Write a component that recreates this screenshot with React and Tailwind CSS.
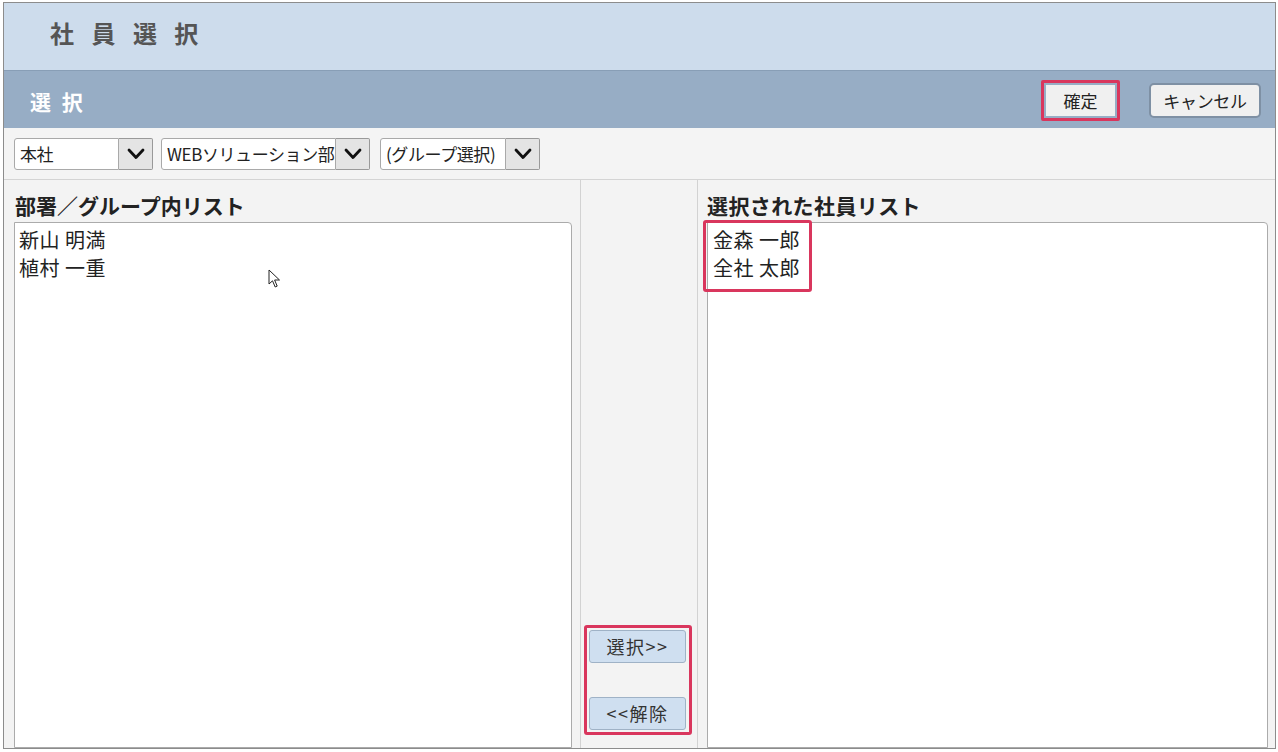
import React from "react";

const FONT = { fontFamily: '"Noto Sans CJK JP", "Noto Sans", sans-serif' };

const Chevron = () => (
  <svg width="18" height="12" viewBox="0 0 18 12">
    <path d="M2 2 L9 9.5 L16 2" fill="none" stroke="#111" strokeWidth="2.8" strokeLinecap="round" strokeLinejoin="round" />
  </svg>
);

// select box with separate dropdown button
const Select = ({ label, width }) => (
  <div className="flex h-[32px]" style={{ width }}>
    <div className="flex-1 min-w-0 flex items-center pl-[5px] bg-white border border-[#a9a9a9] rounded-l-[3px] overflow-hidden whitespace-nowrap text-[17px] tracking-[-0.4px] text-[#222]">
      {label}
    </div>
    <div className="w-[34px] flex items-center justify-center bg-[#e4e4e4] border border-l-0 border-[#999] rounded-r-[2px]">
      <Chevron />
    </div>
  </div>
);

const Cursor = () => (
  <svg className="absolute left-[253px] top-[46px]" width="14" height="20" viewBox="0 0 14 20">
    <path d="M1 1 L1 15 L4.5 11.8 L7.2 18 L9.2 17.1 L6.6 11 L11.5 11 Z" fill="#fff" stroke="#222" strokeWidth="1" strokeLinejoin="round" />
  </svg>
);

const MidButton = ({ children }) => (
  <button className="w-[97px] h-[33px] flex items-center justify-center bg-[#cfdff0] border border-[#9fb2c6] rounded-[3px] text-[18px] tracking-[1.5px] text-[#333]">
    {children}
  </button>
);

export default function App() {
  return (
    <div className="w-[1278px] h-[752px] bg-white pt-[2px] pl-[3px]" style={FONT}>
      <div className="w-[1273px] h-[747px] border border-[#8c8c8c] flex flex-col overflow-hidden">
        {/* title */}
        <div className="h-[67px] shrink-0 bg-[#cddcec] flex items-center pl-[46px] pb-[8px]">
          <h1 className="text-[24px] font-bold text-[#555] tracking-[6px]">社 員 選 択</h1>
        </div>

        {/* action bar */}
        <div className="h-[58px] shrink-0 bg-[#97adc5] border-t border-[#889eb6] flex items-center justify-between pl-[26px] pr-[14px]">
          <span className="text-[21px] font-bold text-white tracking-[3px] pt-[4px]">選 択</span>
          <div className="flex items-center gap-[29px] pt-[2px]">
            <div className="w-[79px] h-[41px] border-[3px] border-[#d9365d] rounded-[2px] p-[2px]">
              <button className="w-full h-full bg-[#f0f0f0] text-[17px] text-[#222] flex items-center justify-center">確定</button>
            </div>
            <button className="w-[112px] h-[35px] bg-[#f0f0f0] border-2 border-[#7e90a4] rounded-[5px] text-[17px] tracking-[-0.3px] text-[#222] flex items-center justify-center">
              キャンセル
            </button>
          </div>
        </div>

        {/* filters */}
        <div className="h-[52px] shrink-0 bg-[#f4f4f4] border-b border-[#d4d4d4] flex items-start pt-[10px] pl-[10px] gap-[8px]">
          <Select label="本社" width={139} />
          <Select label="WEBソリューション部" width={209} />
          <div className="ml-[2px]">
            <Select label="(グループ選択)" width={160} />
          </div>
        </div>

        {/* lists */}
        <div className="flex-1 min-h-0 flex bg-[#f3f3f3]">
          <div className="w-[577px] shrink-0 border-r border-[#d2d2d2] pl-[10px] pt-[11px] flex flex-col">
            <h2 className="h-[28px] leading-[28px] text-[21px] font-bold text-[#222] pl-[1px]">部署／グループ内リスト</h2>
            <div className="relative mt-[3px] w-[558px] h-[600px] bg-white border border-[#ababab] rounded-tr-[4px] pl-[4px] pt-[3px] text-[20px] tracking-[0.5px] leading-[28px] text-[#222]">
              <div>新山 明満</div>
              <div>植村 一重</div>
              <Cursor />
            </div>
          </div>

          <div className="w-[117px] shrink-0 border-r border-[#d2d2d2] flex flex-col justify-end pb-[13px] pl-[3px]">
            <div className="w-[108px] border-[3px] border-[#d9365d] rounded-[3px] p-[2px] flex flex-col gap-[34px]">
              <MidButton>選択&gt;&gt;</MidButton>
              <MidButton>&lt;&lt;解除</MidButton>
            </div>
          </div>

          <div className="flex-1 min-w-0 pl-[9px] pr-[7px] pt-[11px] flex flex-col">
            <h2 className="h-[28px] leading-[28px] text-[21px] tracking-[0.4px] font-bold text-[#222]">選択された社員リスト</h2>
            <div className="relative mt-[3px] h-[600px] bg-white border border-[#ababab] rounded-tr-[4px] pl-[5px] pt-[3px] text-[20px] tracking-[0.5px] leading-[28px] text-[#222]">
              <div>金森 一郎</div>
              <div>全社 太郎</div>
              <div className="absolute left-[-5px] top-[-3px] w-[109px] h-[72px] border-[3px] border-[#d9365d] rounded-[3px]" />
            </div>
          </div>
        </div>
      </div>
    </div>
  );
}
